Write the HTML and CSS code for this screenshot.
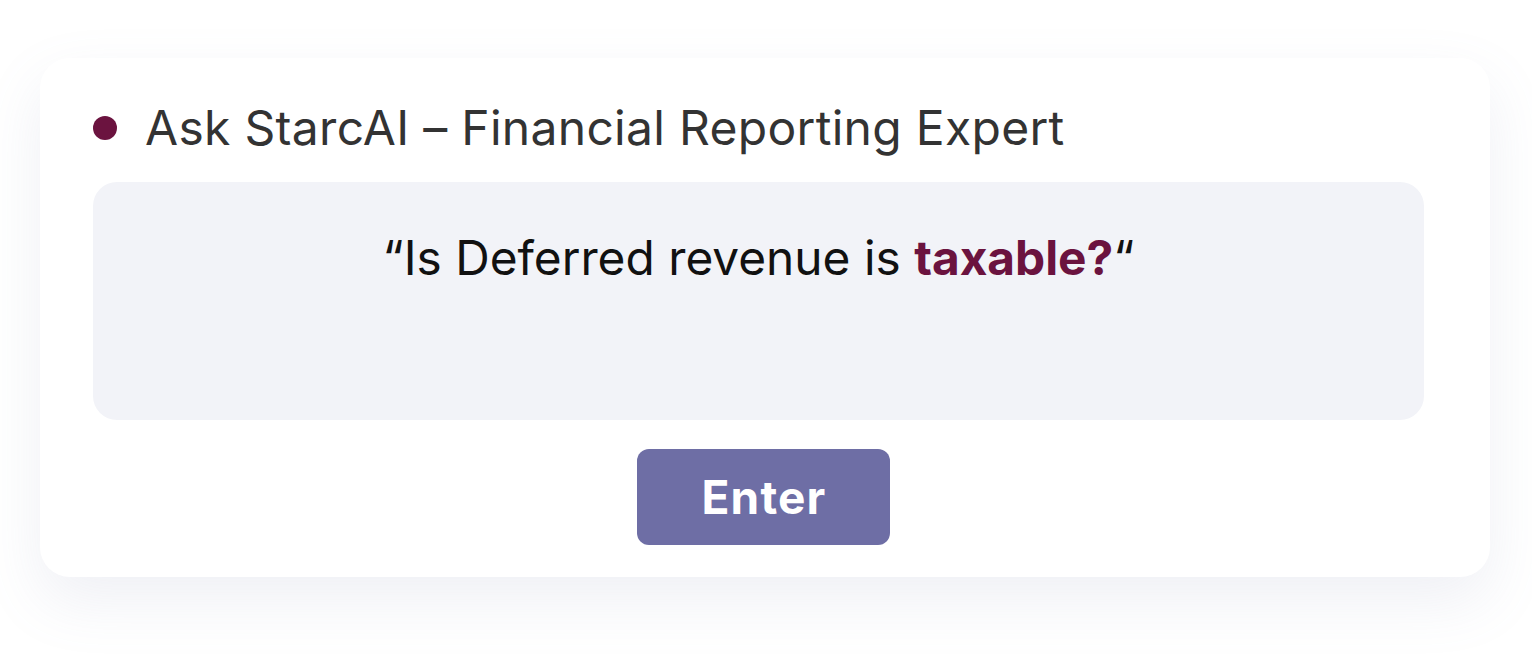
FILE: index.html
```html
<!DOCTYPE html>
<html lang="en">
<head>
<meta charset="utf-8">
<title>Ask StarcAI</title>
<link rel="stylesheet" href="styles.css">
</head>
<body>
<main class="card">
  <div class="title-row">
    <span class="dot"></span>
    <h1 class="title">Ask StarcAI – Financial Reporting Expert</h1>
  </div>
  <div class="query-box">
    <p class="query">“Is Deferred revenue is <strong class="accent">taxable?</strong>“</p>
  </div>
  <div class="actions">
    <button class="enter-btn" type="button">Enter</button>
  </div>
</main>
</body>
</html>
```
FILE: styles.css
```css
* { box-sizing: border-box; }
html, body { margin: 0; padding: 0; }
body {
  background: #ffffff;
  font-family: Inter, "Noto Sans", "Liberation Sans", sans-serif;
  width: 1532px;
  height: 658px;
  overflow: hidden;
}
.card {
  margin: 58px 0 0 40px;
  width: 1450px;
  height: 519px;
  background: #ffffff;
  border-radius: 30px;
  box-shadow: 0 24px 60px rgba(120, 130, 170, 0.12);
  padding: 46px 66px 32px 53px;
  display: flex;
  flex-direction: column;
}
.title-row {
  display: flex;
  align-items: center;
  gap: 28px;
  height: 48px;
}
.dot {
  width: 24px;
  height: 24px;
  border-radius: 50%;
  background: #6b133f;
  flex: none;
}
.title {
  margin: 0;
  font-size: 48px;
  font-weight: 400;
  line-height: 48px;
  letter-spacing: 0.3px;
  color: #333333;
}
.query-box {
  margin-top: 30px;
  height: 238px;
  background: #f2f3f8;
  border-radius: 24px;
  padding-top: 52px;
}
.query {
  margin: 0;
  text-align: center;
  font-size: 47.8px;
  line-height: 48px;
  color: #111111;
}
.accent {
  color: #6b133f;
  font-weight: 700;
}
.actions {
  margin-top: 29px;
  display: flex;
  justify-content: center;
  padding-left: 9px;
}
.enter-btn {
  width: 253px;
  height: 96px;
  border: none;
  border-radius: 12px;
  background: #6e6ea5;
  color: #ffffff;
  font-family: Inter, "Noto Sans", "Liberation Sans", sans-serif;
  font-size: 46px;
  font-weight: 700;
  letter-spacing: 1.2px;
  padding: 0 0 0 2px;
}
```
